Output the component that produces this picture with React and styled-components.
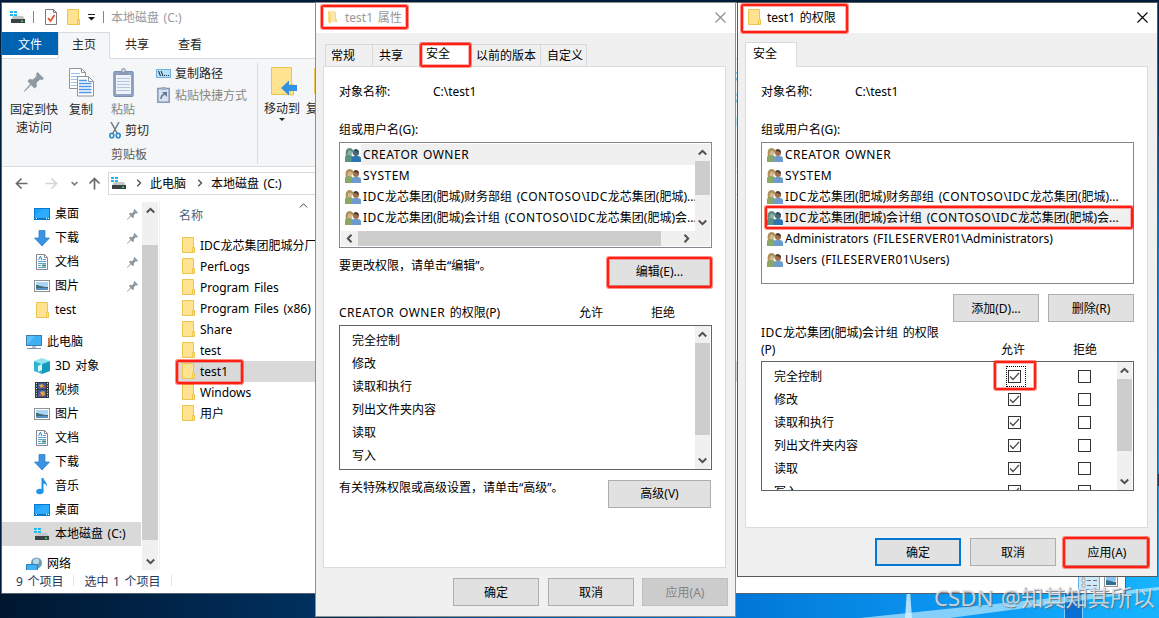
import React from 'react';
import styled, { createGlobalStyle, css } from 'styled-components';

const GlobalStyle = createGlobalStyle`
  * {
    box-sizing: border-box;
  }
  body {
    margin: 0;
    overflow: hidden;
    font-family: "Noto Sans", "Noto Sans CJK SC", sans-serif;
    font-size: 12px;
    word-spacing: 1.5px;
    color: #000;
  }
  svg {
    display: block;
    flex: none;
  }
`;

const Desktop = styled.div`
  position: relative;
  width: 1159px;
  height: 618px;
  overflow: hidden;
  background: #001c3b;
  white-space: nowrap;
`;

const Wallpaper = styled.svg`
  position: absolute;
  inset: 0;
`;

const Window = styled.section`
  position: absolute;
  isolation: isolate;
  left: ${(p) => p.$x}px;
  top: ${(p) => p.$y}px;
  width: ${(p) => p.$w}px;
  height: ${(p) => p.$h}px;
  display: flex;
  flex-direction: column;
  overflow: hidden;
  border: 1px solid ${(p) => p.$edge || '#6b6b6b'};
  background: ${(p) => p.$bg || '#f0f0f0'};
`;

// red highlight frames drawn above the windows
const Mark = styled.div`
  position: absolute;
  left: ${(p) => p.$x}px;
  top: ${(p) => p.$y}px;
  width: ${(p) => p.$w}px;
  height: ${(p) => p.$h}px;
  border: 2px solid #ff2013;
  border-radius: 2px;
  box-shadow: 0 0 0 1px rgba(255, 32, 19, 0.5), inset 0 0 0 1px rgba(255, 32, 19, 0.35);
`;

const Watermark = styled.div`
  position: absolute;
  left: 934px;
  top: 582px;
  font-size: 22.3px;
  line-height: 32px;
  color: rgba(225, 228, 232, 0.85);
  text-shadow: 1px 1px 1px rgba(90, 100, 115, 0.8);
`;

const Caps = styled.span`
  letter-spacing: 0.5px;
`;

// runs of capitals are set a little wider than the rest
const Spaced = ({ children }) =>
  children.split(/([A-Z]{3,})/).map((part, i) => (i % 2 ? <Caps key={i}>{part}</Caps> : part));

/* ---------- icons ---------- */

const FolderIcon = ({ w = 13, h = 16 }) => (
  <svg width={w} height={h} viewBox="0 0 13 16">
    <path d="M.5.5h11v10h1v5h-12z" fill="#ffe391" stroke="#ecc551" />
    <path d="M10.500 15v-4.500h2" fill="none" stroke="#ecc551" />
  </svg>
);

const FadedFolderIcon = () => (
  <svg width="13" height="16" viewBox="0 0 13 16">
    <path d="M2 2h7v11H2z" fill="#fbe7ac" />
    <path d="M2 2l3 2v11l-3-2z" fill="#f8da83" />
    <path d="M9 3h1v7h1v3H9z" fill="#f5d88c" />
  </svg>
);

const DriveIcon = () => (
  <svg width="16" height="14" viewBox="0 0 16 14">
    <path d="M0 1h3v2H0zM4 1h3v2H4zM0 4h3v2H0zM4 4h3v2H4z" fill="#1fb6f5" />
    <path d="M3 6h10l2 4H1z" fill="#c3c6c8" />
    <path d="M1 9h14v4H1z" fill="#3c4144" />
    <path d="M11 10.500h2v1.500h-2z" fill="#35e05a" />
  </svg>
);

const DesktopIcon = () => (
  <svg width="16" height="12" viewBox="0 0 16 12">
    <rect x=".5" y=".5" width="15" height="11" fill="#1aa2fb" stroke="#0b78cf" />
    <path d="M1 7L9 1h6v9H1z" fill="#36affc" opacity=".7" />
    <path d="M1 10.500h14" stroke="#0b6fc4" />
    <path d="M2 10.500h1M12 10.500h1M14 10.500h1" stroke="#fff" />
  </svg>
);

const DownloadIcon = () => (
  <svg width="16" height="17" viewBox="0 0 16 17">
    <path d="M5 .5h6V8h4.500L8 16 .5 8H5z" fill="#3a93e3" stroke="#2a7bc6" strokeWidth=".7" />
  </svg>
);

const DocumentIcon = () => (
  <svg width="12" height="16" viewBox="0 0 12 16">
    <path d="M.5.5h8l3 3v12H.5z" fill="#fff" stroke="#85898c" />
    <path d="M8.500.5v3h3" fill="none" stroke="#85898c" />
    <path d="M2.500 6L4.500 2 6 6" fill="none" stroke="#2a8ac0" />
    <path d="M7 5.500h3M2 7.500h8M2 9.500h8M2 11.500h3M2 13.500h8" stroke="#5b9fc8" />
    <path d="M6 10.500h4v2H6z" fill="#3d8a80" />
  </svg>
);

const PictureIcon = () => (
  <svg width="16" height="12" viewBox="0 0 16 12">
    <rect x=".5" y=".5" width="15" height="11" fill="#fff" stroke="#8d9194" />
    <path d="M2 2h12v8H2z" fill="#a9d4f3" />
    <path d="M2 5c3 0 5 2 12 2v3H2z" fill="#3d6c78" />
    <path d="M2 8h12v2H2z" fill="#5790be" />
  </svg>
);

const ComputerIcon = () => (
  <svg width="16" height="15" viewBox="0 0 16 15">
    <rect x=".5" y=".5" width="15" height="10" fill="#5ec2f8" stroke="#3c7fae" />
    <path d="M1 10L9 1h6v9z" fill="#3fb0f3" />
    <path d="M6 11h4v2H6z" fill="#b5c2cb" />
    <path d="M1 13.500h14" stroke="#7c97a8" />
  </svg>
);

const CubeIcon = () => (
  <svg width="16" height="16" viewBox="0 0 16 16">
    <path d="M0 3l8-3 8 3-8 3z" fill="#8ee4f1" />
    <path d="M0 3l8 3v10l-8-3z" fill="#2cb6d2" />
    <path d="M16 3L8 6v10l8-3z" fill="#159cbd" />
    <path d="M4 8l4-2v6l-4 2z" fill="#dff8fb" />
  </svg>
);

const VideoIcon = () => (
  <svg width="14" height="16" viewBox="0 0 14 16">
    <path d="M0 0h14v16H0z" fill="#33383c" />
    <path d="M3 1h8v6H3z" fill="#3d5f9f" />
    <path d="M3 8h8v7H3z" fill="#415ca4" />
    <path d="M4 3l3-1 2 2-3 2zM5 10l4-1 1 4-3 1z" fill="#e4a83a" />
    <path d="M8 4h2v2H8zM4 12h2v2H4z" fill="#cf4a3a" />
    <path d="M1.500 1v14M12.500 1v14" stroke="#e4e4e4" strokeDasharray="1 1.500" />
  </svg>
);

const MusicIcon = () => (
  <svg width="12" height="17" viewBox="0 0 12 17">
    <ellipse cx="3.800" cy="13.500" rx="3.600" ry="2.800" fill="#1d93ec" />
    <path d="M5.500 0h2c.2 3 4 4 3.500 9-.6-2.500-1.800-3.300-3.500-3.500V14h-2z" fill="#1d93ec" />
  </svg>
);

const NetworkIcon = () => (
  <svg width="16" height="15" viewBox="0 0 16 15">
    <circle cx="10.500" cy="6" r="5.500" fill="#6c9db8" />
    <path d="M7 4c2-3 5-3 6-1s-2 4-1 6c-3 0-5-2-5-5z" fill="#b8d9e6" />
    <path d="M.5 7.500h11v7H.5z" fill="#3fb2f7" stroke="#2b80b4" />
  </svg>
);

const PinIcon = ({ size = 11 }) => (
  <svg width={size} height={size} viewBox="0 0 20 20">
    <path
      d="M13.500 0L20 6.500l-2 1.500-2-.5-3.500 3.500.3 3.500-2.300 2L7 13l-6 6.500L0 20l.5-1.500L6 12 3.500 9l2-2 3.500.5L12.500 4 12 2z"
      fill="#8d99a3"
    />
  </svg>
);

const CopyIcon = () => (
  <svg width="25" height="29" viewBox="0 0 25 29">
    <path d="M.5.5h12l4 4v16H.5z" fill="#fff" stroke="#8e959b" />
    <path d="M12.500.5v4h4" fill="none" stroke="#8e959b" />
    <path d="M2 5.500h9M2 8.500h12M2 11.500h12M2 14.500h12M2 17.500h12" stroke="#9ec3ec" />
    <path d="M8.500 8.500h11l5 5v14.500h-16z" fill="#fff" stroke="#8e959b" />
    <path d="M19.500 8.500v5h5" fill="none" stroke="#8e959b" />
    <path d="M10 12.500h8M10 15.500h12.500M10 18.500h12.500M10 21.500h12.500M10 24.500h12.500" stroke="#4e94e4" strokeWidth="1.300" />
  </svg>
);

const PasteIcon = () => (
  <svg width="21" height="29" viewBox="0 0 21 29">
    <rect x=".8" y="3.500" width="19.400" height="25" rx="1" fill="#8fa3c3" stroke="#7890b4" />
    <path d="M3 7h15v19H3z" fill="#eef2f9" />
    <path d="M6 4h9v3H6z" fill="#8b9ab0" />
    <circle cx="10.500" cy="2.500" r="2" fill="#c9d2df" stroke="#8b9ab0" />
    <path d="M4 10.500h13M4 13.500h13M4 16.500h13M4 19.500h13M4 22.500h13" stroke="#b6c5dd" />
  </svg>
);

const CutIcon = () => (
  <svg width="12" height="17" viewBox="0 0 12 17">
    <path d="M2 0l6 11M10 0L4 11" stroke="#6f7a84" strokeWidth="1.500" fill="none" />
    <ellipse cx="2.800" cy="13.500" rx="2" ry="2.300" fill="none" stroke="#2b8ac6" strokeWidth="1.600" />
    <ellipse cx="9.200" cy="13.500" rx="2" ry="2.300" fill="none" stroke="#2b8ac6" strokeWidth="1.600" />
  </svg>
);

const PathIcon = () => (
  <svg width="15" height="9" viewBox="0 0 15 9">
    <rect x=".5" y=".5" width="14" height="8" fill="#b6e0fa" stroke="#6db3dc" />
    <path d="M2.500 2l2 5M5 2l2 5" stroke="#123" />
    <path d="M8 6.500h1M10 6.500h1M12 6.500h1" stroke="#123" />
  </svg>
);

const ShortcutIcon = () => (
  <svg width="13" height="16" viewBox="0 0 13 16">
    <rect x=".8" y="1.500" width="11.400" height="13.700" fill="#d9e0ee" stroke="#8398ba" strokeWidth="1.500" />
    <path d="M4 0h5v3H4z" fill="#a2aec2" />
    <path d="M4 12c0-3 1-4 3.500-5" fill="none" stroke="#62799f" strokeWidth="1.600" />
    <path d="M5 5h5v5z" fill="#62799f" />
  </svg>
);

const MoveIcon = () => (
  <svg width="26" height="29" viewBox="0 0 26 29">
    <path d="M.5.5h20v27H.5z" fill="#ffe391" stroke="#ecc551" />
    <path d="M19 17.500h3.500V28H19z" fill="#ffe391" stroke="#ecc551" />
    <path d="M10 21l8-7.500v4.500h8v6h-8v4.500z" fill="#3490e0" />
  </svg>
);

const UsersIcon = ({ selected }) => (
  <svg width="16" height="14" viewBox="0 0 16 14">
    <path d="M0 14V9.500c0-2 2-2.500 4-2.500s4 .5 4 2.500V14z" fill={selected ? '#5a9183' : '#89a866'} />
    <circle cx="4.500" cy="4" r="3.200" fill={selected ? '#8eb0a2' : '#d6b88c'} />
    <path d="M1 8C0 4 1 0 4.500 0S8.500 3 8 5C6.500 3.500 6 2.500 4.500 2.500S2.500 5 2.500 8z" fill={selected ? '#5e8a82' : '#ac9158'} />
    <path d="M6.500 14v-3.500c0-2 2.500-2.500 4.500-2.500 3 0 5 .5 5 2.500V14z" fill={selected ? '#2e74ad' : '#6d9bcb'} />
    <circle cx="11" cy="5" r="3" fill={selected ? '#4c6778' : '#a06f4d'} />
    <path d="M8 3.500C8.500 0 13.500 0 14 4l-1 1c0-1.500-3-2-5-1.500z" fill={selected ? '#294b63' : '#4f3b2e'} />
  </svg>
);

const CloseIcon = ({ color }) => (
  <svg width="11" height="11" viewBox="0 0 11 11">
    <path d="M.5.5l10 10M10.500.5l-10 10" stroke={color} strokeWidth="1.100" />
  </svg>
);

const turns = { up: 0, right: 90, down: 180, left: 270 };
const Chevron = ({ dir = 'up', color = '#505050', size = 9, weight = 2 }) => (
  <svg width={size} height={size} viewBox="0 0 9 9">
    <path
      d="M.8 6.500l3.700-3.700 3.700 3.700"
      fill="none"
      stroke={color}
      strokeWidth={weight}
      transform={`rotate(${turns[dir]} 4.500 4.500)`}
    />
  </svg>
);

const Arrow = ({ dir = 'left', color = '#6b6b6b' }) => (
  <svg width="13" height="13" viewBox="0 0 13 13">
    <path
      d="M6.500 12.500V1.500M1.500 6.500l5-5 5 5"
      fill="none"
      stroke={color}
      strokeWidth="1.700"
      transform={`rotate(${turns[dir]} 6.500 6.500)`}
    />
  </svg>
);

const TinyCaret = () => (
  <svg width="6" height="3" viewBox="0 0 6 3">
    <path d="M0 0h6L3 3z" fill="#222" />
  </svg>
);

/* ---------- scroll bars ---------- */

const Track = styled.div`
  flex: none;
  display: flex;
  flex-direction: ${(p) => (p.$horizontal ? 'row' : 'column')};
  align-items: center;
  justify-content: space-between;
  width: ${(p) => (p.$horizontal ? 'auto' : `${p.$size || 15}px`)};
  height: ${(p) => (p.$horizontal ? '15px' : 'auto')};
  background: #f0f0f0;
`;

const TrackEnd = styled.div`
  flex: none;
  width: 16px;
  height: 17px;
  display: flex;
  align-items: center;
  justify-content: center;
`;

const Thumb = styled.div`
  flex: none;
  background: #cdcdcd;
  ${(p) =>
    p.$horizontal
      ? css`
          width: ${p.$length}px;
          height: 100%;
          margin: 0 auto 0 1px;
        `
      : css`
          width: 100%;
          height: ${p.$length}px;
          margin-top: ${p.$offset || 0}px;
          margin-bottom: auto;
        `}
`;

const VScroll = ({ length, size, offset }) => (
  <Track $size={size}>
    <TrackEnd><Chevron dir="up" /></TrackEnd>
    <Thumb $length={length} $offset={offset} />
    <TrackEnd><Chevron dir="down" /></TrackEnd>
  </Track>
);

/* ---------- explorer ---------- */

const ExplorerTitle = styled.header`
  flex: none;
  height: 29px;
  display: flex;
  align-items: center;
  padding: 0 0 1px 8px;
  color: #999;
`;

const TitleRule = styled.i`
  width: 1px;
  height: 12px;
  background: #858585;
  margin: 0 ${(p) => p.$right}px 0 ${(p) => p.$left}px;
`;

const TitleIcon = styled.span`
  margin-right: ${(p) => p.$gap}px;
`;

const RibbonTabs = styled.nav`
  flex: none;
  display: flex;
  height: 27px;
  border-bottom: 1px solid #dadbdc;
`;

const RibbonTab = styled.div`
  height: 27px;
  width: ${(p) => p.$w}px;
  line-height: 25px;
  text-align: center;
  color: #262626;
  ${(p) =>
    p.$file &&
    css`
      height: 23px;
      color: #fff;
      background: #0063b1;
    `}
  ${(p) =>
    p.$active &&
    css`
      line-height: 24px;
      background: #f5f6f7;
      border: 1px solid #dadbdc;
      border-bottom: 0;
    `}
`;

const Ribbon = styled.div`
  flex: none;
  display: flex;
  height: 108px;
  background: #f5f6f7;
  border-bottom: 1px solid #dadbdc;
  color: #262626;
  padding-top: 8px;
`;

const BigButton = styled.div`
  flex: none;
  width: ${(p) => p.$w}px;
  margin-left: ${(p) => p.$left || 0}px;
  display: flex;
  flex-direction: column;
  align-items: center;
  line-height: 18px;
  color: ${(p) => (p.$disabled ? '#858585' : '#262626')};
`;

const BigIcon = styled.div`
  height: 33px;
  display: flex;
  align-items: ${(p) => (p.$center ? 'center' : 'flex-start')};
  padding: 0 0 ${(p) => (p.$center ? 6 : 0)}px ${(p) => p.$shift || 0}px;
`;

const Clipboard = styled.div`
  width: 256px;
  height: 101px;
  margin-top: -4px;
  padding-top: 5px;
  border-right: 1px solid #dadbdc;
  display: flex;
  flex: none;
`;

const PasteColumn = styled.div`
  width: 54px;
  margin-left: -1px;
`;

const SmallButton = styled.div`
  display: flex;
  align-items: center;
  gap: ${(p) => p.$gap || 4}px;
  height: 22px;
  padding-left: ${(p) => p.$left || 0}px;
  color: ${(p) => (p.$disabled ? '#858585' : '#262626')};
`;

const GroupName = styled.div`
  line-height: 18px;
  margin-top: 5px;
  padding-left: 8px;
  color: #5a5a5a;
`;

const SideColumn = styled.div`
  margin: -6px 0 0 -1px;
`;

const SelectGroup = styled.div`
  margin-left: 370px;
  line-height: 22px;
`;

const AddressRow = styled.div`
  flex: none;
  display: flex;
  align-items: center;
  height: 34px;
  padding: 0 0 1px 13px;
`;

const Slot = styled.span`
  width: ${(p) => p.$w}px;
  flex: none;
`;

const AddressBox = styled.div`
  flex: 1;
  display: flex;
  align-items: center;
  height: 23px;
  padding: 0 0 1px 2px;
  border: 1px solid #d9d9d9;
`;

const ExplorerBody = styled.div`
  flex: none;
  display: flex;
  height: 369px;
`;

const NavTree = styled.div`
  width: 139px;
  flex: none;
  height: 369px;
  padding-top: 1px;
  overflow: hidden;
`;

const NavRow = styled.div`
  display: flex;
  align-items: center;
  height: ${(p) => (p.$last ? 21 : 24)}px;
  margin-top: ${(p) => (p.$root ? 8 : 0)}px;
  padding: 0 3px 0 ${(p) => (p.$root ? 24 : 32)}px;
  background: ${(p) => (p.$selected ? '#d9d9d9' : 'none')};
`;

const NavIcon = styled.span`
  width: 16px;
  margin-right: 5px;
  display: flex;
  justify-content: center;
`;

const NavLabel = styled.span`
  flex: 1;
  line-height: 16px;
  padding-bottom: 1px;
`;

const NavScroll = styled.div`
  display: flex;
  flex: none;
  width: 19px;
  padding: 1px 2px 0 1px;
  border-right: 1px solid #f0f0f0;
  margin-right: 16px;
`;

const FileList = styled.div`
  flex: 1;
`;

const ColumnHead = styled.div`
  display: flex;
  height: 34px;
  line-height: 30px;
  padding-left: 3px;
  color: #4c607a;
`;

const SortMark = styled.span`
  margin-left: 96px;
`;

const FileRow = styled.div`
  display: flex;
  align-items: center;
  gap: 5px;
  height: 21px;
  padding: 0 0 1px 6px;
  background: ${(p) => (p.$selected ? '#d9d9d9' : 'none')};
`;

const StatusBar = styled.footer`
  flex: 1;
  display: flex;
  align-items: center;
  padding: 0 0 2px 14px;
  color: #1e395b;
`;

const StatusRule = styled.i`
  width: 1px;
  height: 11px;
  background: #e3e3e3;
  margin: 0 10px;
`;

const ViewSwitch = styled.div`
  display: flex;
  align-items: center;
  height: 20px;
  margin: 0 6px 0 auto;
`;

const navItems = [
  { icon: <DesktopIcon />, label: '桌面', pin: true },
  { icon: <DownloadIcon />, label: '下载', pin: true },
  { icon: <DocumentIcon />, label: '文档', pin: true },
  { icon: <PictureIcon />, label: '图片', pin: true },
  { icon: <FolderIcon />, label: 'test' },
  { icon: <ComputerIcon />, label: '此电脑', root: true },
  { icon: <CubeIcon />, label: '3D 对象' },
  { icon: <VideoIcon />, label: '视频' },
  { icon: <PictureIcon />, label: '图片' },
  { icon: <DocumentIcon />, label: '文档' },
  { icon: <DownloadIcon />, label: '下载' },
  { icon: <MusicIcon />, label: '音乐' },
  { icon: <DesktopIcon />, label: '桌面' },
  { icon: <DriveIcon />, label: '本地磁盘 (C:)', selected: true },
  { icon: <NetworkIcon />, label: '网络', root: true, last: true },
];

const files = [
  'IDC龙芯集团肥城分厂',
  'PerfLogs',
  'Program Files',
  'Program Files (x86)',
  'Share',
  'test',
  'test1',
  'Windows',
  '用户',
];

const Explorer = () => (
  <Window $x={1} $y={2} $w={1125} $h={592} $bg="#fff" $edge="#56616e">
    <ExplorerTitle>
      <DriveIcon />
      <TitleRule $left={7} $right={11} />
      <TitleIcon $gap={10}>
        <svg width="12" height="16" viewBox="0 0 12 16">
          <path d="M.5.5h8l3 3v12H.5z" fill="#fff" stroke="#777c80" />
          <path d="M8.500.5v3h3" fill="none" stroke="#777c80" />
          <path d="M3 9l2.500 3L9.500 6" fill="none" stroke="#e2522b" strokeWidth="1.800" />
        </svg>
      </TitleIcon>
      <TitleIcon $gap={8}><FolderIcon /></TitleIcon>
      <svg width="7" height="7" viewBox="0 0 7 7">
        <path d="M0 .5h7" stroke="#222" />
        <path d="M0 3h7L3.500 6.500z" fill="#111" />
      </svg>
      <TitleRule $left={8} $right={7} />
      本地磁盘 (C:)
    </ExplorerTitle>
    <RibbonTabs>
      <RibbonTab $w={56} $file>文件</RibbonTab>
      <RibbonTab $w={52} $active>主页</RibbonTab>
      <RibbonTab $w={54}>共享</RibbonTab>
      <RibbonTab $w={52}>查看</RibbonTab>
    </RibbonTabs>
    <Ribbon>
      <Clipboard>
        <BigButton $w={48} $left={8}>
          <BigIcon $center><PinIcon size={20} /></BigIcon>
          <span>固定到快</span>
          <span>速访问</span>
        </BigButton>
        <BigButton $w={46}>
          <BigIcon $shift={1}><CopyIcon /></BigIcon>
          <span>复制</span>
        </BigButton>
        <PasteColumn>
          <BigButton $w={40} $disabled>
            <BigIcon><PasteIcon /></BigIcon>
            <span>粘贴</span>
          </BigButton>
          <SmallButton $gap={4} $left={6}><CutIcon />剪切</SmallButton>
          <GroupName>剪贴板</GroupName>
        </PasteColumn>
        <SideColumn>
          <SmallButton><PathIcon />复制路径</SmallButton>
          <SmallButton $disabled $gap={5} $left={1}><ShortcutIcon />粘贴快捷方式</SmallButton>
        </SideColumn>
      </Clipboard>
      <BigButton $w={44} $left={2}>
        <BigIcon $shift={4}><MoveIcon /></BigIcon>
        <span>移动到</span>
        <TinyCaret />
      </BigButton>
      <BigButton $w={38} $left={1}>
        <BigIcon><FolderIcon w={21} h={28} /></BigIcon>
        <span>复制到</span>
        <TinyCaret />
      </BigButton>
      <SelectGroup>
        <div>全部选择</div>
        <div>全部取消</div>
        <div>反向选择</div>
      </SelectGroup>
    </Ribbon>
    <AddressRow>
      <Slot $w={30}><Arrow dir="left" /></Slot>
      <Slot $w={26}><Arrow dir="right" color="#d4d4d4" /></Slot>
      <Slot $w={17}><Chevron dir="down" size={7} color="#777" /></Slot>
      <Slot $w={20}><Arrow dir="up" /></Slot>
      <AddressBox>
        <Slot $w={24}><DriveIcon /></Slot>
        <Slot $w={15}><Chevron dir="right" size={8} weight={1.5} /></Slot>
        <Slot $w={46}>此电脑</Slot>
        <Slot $w={15}><Chevron dir="right" size={8} weight={1.5} /></Slot>
        本地磁盘 (C:)
      </AddressBox>
    </AddressRow>
    <ExplorerBody>
      <NavTree>
        {navItems.map((item, i) => (
          <NavRow key={i} $root={item.root} $selected={item.selected} $last={item.last}>
            <NavIcon>{item.icon}</NavIcon>
            <NavLabel>{item.label}</NavLabel>
            {item.pin && <PinIcon />}
          </NavRow>
        ))}
      </NavTree>
      <NavScroll><VScroll length={295} size={16} offset={26} /></NavScroll>
      <FileList>
        <ColumnHead>
          名称
          <SortMark><Chevron dir="up" size={9} weight={1} color="#444" /></SortMark>
        </ColumnHead>
        {files.map((name) => (
          <FileRow key={name} $selected={name === 'test1'}>
            <FolderIcon />
            {name}
          </FileRow>
        ))}
      </FileList>
    </ExplorerBody>
    <StatusBar>
      9 个项目
      <StatusRule />
      选中 1 个项目
      <StatusRule />
      <ViewSwitch>
        <svg width="41" height="20" viewBox="0 0 41 20">
          <rect x=".5" y=".5" width="21" height="18" fill="#cfe8fa" stroke="#62b0e4" />
          <path d="M4 3h3v3H4zM4 8h3v3H4zM4 13h3v3H4z" fill="#fff" stroke="#8a9095" strokeWidth=".8" />
          <path d="M9 4.500h4M15 4.500h4M9 9.500h4M15 9.500h4M9 14.500h4M15 14.500h4" stroke="#6a7075" />
          <rect x="26.500" y="3.500" width="13" height="12" fill="#fff" stroke="#8d9194" />
          <path d="M28 5h10v5H28z" fill="#86c3ef" />
          <path d="M28 9l10 2v3H28z" fill="#2d6f8c" />
        </svg>
      </ViewSwitch>
    </StatusBar>
  </Window>
);

/* ---------- dialogs ---------- */

const DialogTitle = styled.header`
  flex: none;
  display: flex;
  align-items: center;
  gap: 6px;
  height: 30px;
  padding: 0 9px 2px ${(p) => p.$left}px;
  background: #fff;
  color: ${(p) => (p.$inactive ? '#999' : '#000')};
  svg:last-child {
    margin-left: auto;
  }
`;

const DialogTabs = styled.nav`
  flex: none;
  display: flex;
  align-items: flex-end;
  height: 33px;
  padding-left: ${(p) => p.$left}px;
`;

const DialogTab = styled.div`
  width: ${(p) => p.$w}px;
  height: 22px;
  padding-left: 6px;
  line-height: 22px;
  border: 1px solid #d9d9d9;
  border-width: 1px 1px 0 0;
  &:first-child {
    border-left-width: 1px;
    padding-left: 5px;
  }
  ${(p) =>
    p.$active &&
    css`
      height: 25px;
      margin-bottom: -1px;
      padding-bottom: 1px;
      background: #fff;
      z-index: 1;
      &&:first-child {
        padding-left: 7px;
      }
    `}
`;

const Panel = styled.div`
  flex: none;
  display: flex;
  flex-direction: column;
  height: ${(p) => p.$h}px;
  margin: 0 ${(p) => p.$right}px 0 7px;
  padding: 16px 13px 0 15px;
  background: #fff;
  border: 1px solid #dcdcdc;
`;

const Line = styled.div`
  flex: none;
  display: flex;
  height: ${(p) => p.$h}px;
  padding-bottom: ${(p) => p.$bottom || 0}px;
  line-height: ${(p) => p.$leading || 18}px;
`;

const ObjectLabel = styled.span`
  width: 94px;
`;

const Box = styled.div`
  flex: none;
  display: flex;
  flex-direction: column;
  height: ${(p) => p.$h}px;
  padding: ${(p) => (p.$dark ? 0 : 1)}px;
  padding-right: 1px;
  border: 1px solid ${(p) => (p.$dark ? '#646464' : '#828790')};
  overflow: hidden;
`;

const BoxBody = styled.div`
  flex: 1;
  display: flex;
  min-height: 0;
`;

const Rows = styled.div`
  flex: 1;
  min-width: 0;
  overflow: hidden;
`;

const UserRow = styled.div`
  display: flex;
  align-items: center;
  height: 21px;
  padding-left: 4px;
`;

const UserName = styled.span`
  flex: 1;
  min-width: 0;
  height: 21px;
  line-height: 21px;
  padding-left: 2px;
  overflow: hidden;
  background: ${(p) => (p.$selected ? '#f0f0f0' : 'none')};
`;

const PermRows = styled(Rows)`
  padding: 3px 0 0 12px;
`;

const PermRow = styled.div`
  display: flex;
  align-items: center;
  height: 23px;
`;

const PermName = styled.span`
  flex: none;
  width: 228px;
  line-height: 17px;
  padding-bottom: 1px;
`;

const CheckSlot = styled.span`
  position: relative;
  flex: none;
  display: flex;
  align-items: center;
  width: 70px;
  padding-left: 6px;
  height: 23px;
`;

const FocusRing = styled.i`
  position: absolute;
  left: 4px;
  top: 1px;
  width: 20px;
  height: 21px;
  border: 1px dotted #000;
`;

const Check = ({ on }) => (
  <svg width="13" height="13" viewBox="0 0 13 13">
    <rect x=".5" y=".5" width="12" height="12" fill="#fff" stroke="#333" />
    {on && <path d="M2 6.500L5 9.500l6-6.500" fill="none" stroke="#4a4a4a" strokeWidth="1.300" />}
  </svg>
);

const Button = styled.button`
  flex: none;
  width: ${(p) => p.$w || 86}px;
  height: 28px;
  padding: 0 0 1px;
  font: inherit;
  color: ${(p) => (p.disabled ? '#838383' : '#000')};
  background: ${(p) => (p.disabled ? '#cccccc' : '#e1e1e1')};
  border: ${(p) => (p.$primary ? '2px solid #0078d7' : `1px solid ${p.disabled ? '#bfbfbf' : '#adadad'}`)};
`;

const Buttons = styled.div`
  display: flex;
  justify-content: flex-end;
  gap: 9px;
  margin: ${(p) => p.$top}px ${(p) => p.$right}px 0 0;
  ${Button}:nth-child(3) {
    margin-left: -1px;
  }
`;

const Hint = styled.div`
  flex: none;
  display: flex;
  justify-content: space-between;
  line-height: 18px;
  height: ${(p) => p.$h}px;
  padding-right: 1px;
`;

const PushDown = styled.div`
  padding-top: ${(p) => p.$top}px;
`;

const HeadLabel = styled.span`
  width: ${(p) => p.$w}px;
  align-self: flex-end;
`;

const groups = [
  'CREATOR OWNER',
  'SYSTEM',
  'IDC龙芯集团(肥城)财务部组 (CONTOSO\\IDC龙芯集团(肥城)...',
  'IDC龙芯集团(肥城)会计组 (CONTOSO\\IDC龙芯集团(肥城)会...',
  'Administrators (FILESERVER01\\Administrators)',
  'Users (FILESERVER01\\Users)',
];

const permissions = ['完全控制', '修改', '读取和执行', '列出文件夹内容', '读取', '写入'];

const UserRows = ({ names, selected }) => (
  <Rows>
    {names.map((name, i) => (
      <UserRow key={name}>
        <UsersIcon selected={i === selected} />
        <UserName $selected={i === selected}><Spaced>{name}</Spaced></UserName>
      </UserRow>
    ))}
  </Rows>
);

const PropertiesDialog = () => (
  <Window $x={315} $y={2} $w={421} $h={615} $edge="#8f8f8f">
    <DialogTitle $left={10} $inactive>
      <FadedFolderIcon />
      test1 属性
      <CloseIcon color="#8a8a8a" />
    </DialogTitle>
    <DialogTabs $left={9}>
      <DialogTab $w={48}>常规</DialogTab>
      <DialogTab $w={47}>共享</DialogTab>
      <DialogTab $w={50} $active>安全</DialogTab>
      <DialogTab $w={71}>以前的版本</DialogTab>
      <DialogTab $w={46}>自定义</DialogTab>
    </DialogTabs>
    <Panel $h={502} $right={9}>
      <Line $h={38}><ObjectLabel>对象名称:</ObjectLabel>C:\test1</Line>
      <Line $h={21}>组或用户名(G):</Line>
      <Box $h={106}>
        <BoxBody>
          <UserRows names={groups.slice(0, 4)} selected={0} />
          <VScroll length={34} size={15} />
        </BoxBody>
        <Track $horizontal>
          <TrackEnd><Chevron dir="left" /></TrackEnd>
          <Thumb $horizontal $length={303} />
          <TrackEnd><Chevron dir="right" /></TrackEnd>
          <Slot $w={16} />
        </Track>
      </Box>
      <Hint $h={55}>
        <PushDown $top={9}>要更改权限，请单击“编辑”。</PushDown>
        <PushDown $top={10}><Button $w={103}>编辑(E)...</Button></PushDown>
      </Hint>
      <Line $h={22} $bottom={3}>
        <HeadLabel $w={240}><Spaced>CREATOR OWNER 的权限(P)</Spaced></HeadLabel>
        <HeadLabel $w={72}>允许</HeadLabel>
        <HeadLabel $w={40}>拒绝</HeadLabel>
      </Line>
      <Box $h={145} $dark>
        <BoxBody>
          <PermRows>
            {permissions.map((name) => (
              <PermRow key={name}><PermName>{name}</PermName></PermRow>
            ))}
          </PermRows>
          <VScroll length={92} size={15} />
        </BoxBody>
      </Box>
      <Hint $h={40}>
        <PushDown $top={9}>有关特殊权限或高级设置，请单击“高级”。</PushDown>
        <PushDown $top={10}><Button $w={103}>高级(V)</Button></PushDown>
      </Hint>
    </Panel>
    <Buttons $top={10} $right={7}>
      <Button>确定</Button>
      <Button>取消</Button>
      <Button disabled>应用(A)</Button>
    </Buttons>
  </Window>
);

const PermissionsDialog = () => (
  <Window $x={737} $y={2} $w={421} $h={575} $edge="#5a5a5a">
    <DialogTitle $left={10}>
      <FolderIcon />
      test1 的权限
      <CloseIcon color="#000" />
    </DialogTitle>
    <DialogTabs $left={7}>
      <DialogTab $w={52} $active>安全</DialogTab>
    </DialogTabs>
    <Panel $h={462} $right={9}>
      <Line $h={38}><ObjectLabel>对象名称:</ObjectLabel>C:\test1</Line>
      <Line $h={21}>组或用户名(G):</Line>
      <Box $h={142}>
        <BoxBody><UserRows names={groups} selected={3} /></BoxBody>
      </Box>
      <Buttons $top={10} $right={0}>
        <Button>添加(D)...</Button>
        <Button>删除(R)</Button>
      </Buttons>
      <Line $h={39} $bottom={3} $leading={17}>
        <HeadLabel $w={240}><Spaced>IDC龙芯集团(肥城)会计组 的权限</Spaced><br />(P)</HeadLabel>
        <HeadLabel $w={72}>允许</HeadLabel>
        <HeadLabel $w={40}>拒绝</HeadLabel>
      </Line>
      <Box $h={130} $dark>
        <BoxBody>
          <PermRows>
            {permissions.map((name, i) => (
              <PermRow key={name}>
                <PermName>{name}</PermName>
                <CheckSlot>
                  <Check on />
                  {i === 0 && <FocusRing />}
                </CheckSlot>
                <CheckSlot><Check /></CheckSlot>
              </PermRow>
            ))}
          </PermRows>
          <VScroll length={72} size={15} />
        </BoxBody>
      </Box>
    </Panel>
    <Buttons $top={10} $right={7}>
      <Button $primary>确定</Button>
      <Button>取消</Button>
      <Button>应用(A)</Button>
    </Buttons>
  </Window>
);

const marks = [
  [321, 5, 87, 24],
  [420, 43, 51, 24],
  [741, 4, 107, 29],
  [607, 257, 105, 31],
  [765, 206, 368, 23],
  [994, 361, 42, 29],
  [1063, 537, 86, 31],
  [176, 360, 67, 24],
];

const App = () => (
  <>
    <GlobalStyle />
    <Desktop>
      <Wallpaper width="1159" height="618" viewBox="0 0 1159 618">
        <defs>
          <linearGradient id="night" x1="0" x2="1" y1="0" y2="0">
            <stop offset="0" stopColor="#001730" />
            <stop offset=".27" stopColor="#00305f" />
            <stop offset=".63" stopColor="#0076d6" />
            <stop offset=".8" stopColor="#0a93ee" />
            <stop offset="1" stopColor="#16b4ff" />
          </linearGradient>
          <linearGradient id="edge" x1="0" x2="0" y1="0" y2="1">
            <stop offset="0" stopColor="#001c3b" />
            <stop offset=".2" stopColor="#00376e" />
            <stop offset=".4" stopColor="#0a7cd0" />
            <stop offset="1" stopColor="#25a5e8" />
          </linearGradient>
        </defs>
        <path d="M1150 0h9v570h-9z" fill="url(#edge)" />
        <path d="M1155 474h4v12h-4z" fill="#0a3a6c" />
        <path d="M0 560h1159v58H0z" fill="url(#night)" />
        <path d="M0 560h1v34H0z" fill="#001c3b" />
        <path d="M1065 590h17v28h-17z" fill="#0a6fd2" />
        <path d="M1064.500 590v28M1082.500 590v28" stroke="#7fd0ff" />
        <path d="M860 618l299-31v3L950 618z" fill="#c8efff" opacity=".65" />
        <path d="M907 590h3l2 28h-7z" fill="#d5f3ff" opacity=".8" />
      </Wallpaper>
      <Explorer />
      <PropertiesDialog />
      <PermissionsDialog />
      {marks.map(([x, y, w, h]) => (
        <Mark key={`${x}-${y}`} $x={x} $y={y} $w={w} $h={h} />
      ))}
      <Watermark>CSDN @知其知其所以</Watermark>
    </Desktop>
  </>
);

export default App;
